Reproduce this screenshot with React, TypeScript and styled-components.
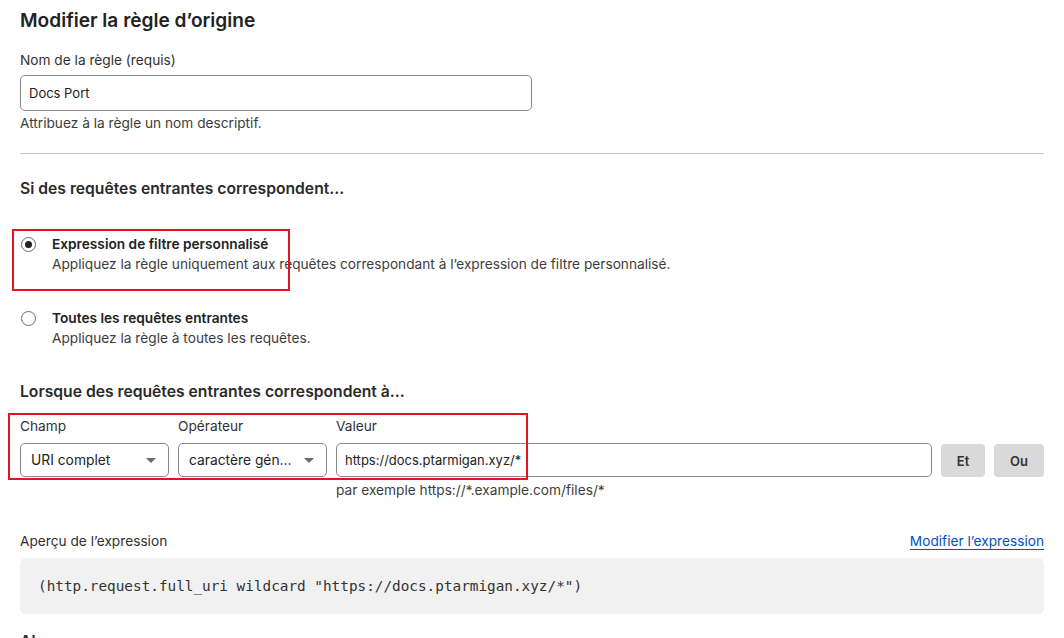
import styled, { createGlobalStyle } from 'styled-components';

const GlobalStyle = createGlobalStyle`
  html, body {
    margin: 0;
    padding: 0;
    background: #ffffff;
  }
  body {
    font-family: Inter, "Noto Sans", Arial, sans-serif;
    color: #313131;
    overflow: hidden;
  }
`;

const Page = styled.div`
  padding: 8px 20px 0 20px;
  width: 1024px;
  height: 638px;
  overflow: hidden;
`;

const Title = styled.h1`
  margin: 0;
  font-size: 19.1px;
  line-height: 24px;
  font-weight: 600;
  color: #222;
`;

const Label = styled.div<{ $mt?: number }>`
  font-size: 13.7px;
  line-height: 20px;
  color: #313131;
  margin-top: ${(p) => p.$mt ?? 0}px;
`;

const Help = styled.div<{ $mt?: number; $indent?: number }>`
  font-size: 13.7px;
  line-height: 20px;
  color: #3d3d3d;
  margin-top: ${(p) => p.$mt ?? 0}px;
  padding-left: ${(p) => p.$indent ?? 0}px;
`;

const TextInput = styled.div<{ $width?: string }>`
  box-sizing: border-box;
  width: ${(p) => p.$width ?? '100%'};
  height: 36px;
  border: 1px solid #8a8a8a;
  border-radius: 5px;
  padding: 0 8px;
  display: flex;
  align-items: center;
  font-size: 13px;
  color: #222;
`;

const Divider = styled.hr`
  margin: 20px 0 0 0;
  border: none;
  border-top: 1px solid #c4c4c4;
  height: 0;
`;

const SectionHeading = styled.h2<{ $mt: number }>`
  margin: ${(p) => p.$mt}px 0 0 0;
  font-size: 15.7px;
  line-height: 24px;
  font-weight: 600;
  color: #2b2b2b;
`;

// red outline drawn over a group of controls
const Highlight = styled.div<{ $l: number; $t: number; $w: number; $h: number }>`
  position: absolute;
  left: ${(p) => p.$l}px;
  top: ${(p) => p.$t}px;
  width: ${(p) => p.$w}px;
  height: ${(p) => p.$h}px;
  border: 2px solid #e3141f;
  box-sizing: border-box;
  pointer-events: none;
`;

const Option = styled.div<{ $mt: number }>`
  position: relative;
  margin-top: ${(p) => p.$mt}px;
  display: flex;
  gap: 16px;
  padding-left: 1px;
`;

const Radio = styled.span<{ $checked?: boolean }>`
  box-sizing: border-box;
  width: 15px;
  height: 15px;
  margin-top: 3px;
  border-radius: 50%;
  border: 1px solid #6b6b6b;
  display: flex;
  align-items: center;
  justify-content: center;
  flex-shrink: 0;
  &::after {
    content: '';
    display: ${(p) => (p.$checked ? 'block' : 'none')};
    width: 7px;
    height: 7px;
    border-radius: 50%;
    background: #222;
  }
`;

const OptionText = styled.div`
  display: flex;
  flex-direction: column;
`;

const OptionTitle = styled.div`
  font-size: 13.7px;
  line-height: 20px;
  font-weight: 600;
  color: #222;
`;

const MatchBlock = styled.div`
  position: relative;
  margin-top: 12px;
`;

const MatchRow = styled.div`
  display: flex;
  align-items: flex-start;
  gap: 9px;
`;

const Field = styled.div<{ $width?: number; $grow?: boolean }>`
  display: flex;
  flex-direction: column;
  gap: 7px;
  width: ${(p) => (p.$width ? `${p.$width}px` : 'auto')};
  flex: ${(p) => (p.$grow ? '1' : 'none')};
`;

const Select = styled.div`
  box-sizing: border-box;
  height: 34px;
  border: 1px solid #8a8a8a;
  border-radius: 5px;
  padding: 0 12px 0 10px;
  display: flex;
  align-items: center;
  justify-content: space-between;
  font-size: 13.8px;
  color: #222;
`;

const Caret = styled.span`
  width: 0;
  height: 0;
  border-left: 5px solid transparent;
  border-right: 5px solid transparent;
  border-top: 5px solid #6b6b6b;
`;

const ValueInput = styled(TextInput)`
  height: 34px;
`;

const Buttons = styled.div`
  display: flex;
  gap: 9px;
  margin-top: 28px;
`;

const SmallButton = styled.button<{ $width: number }>`
  width: ${(p) => p.$width}px;
  height: 33px;
  border: none;
  border-radius: 4px;
  background: #d9d9d9;
  font-family: inherit;
  font-size: 13px;
  font-weight: 600;
  color: #333;
`;

const PreviewHeader = styled.div`
  margin-top: 31px;
  display: flex;
  justify-content: space-between;
  align-items: center;
`;

const Link = styled.a`
  font-size: 13.7px;
  line-height: 20px;
  color: #0051c3;
  text-decoration: underline;
  text-underline-offset: 3px;
`;

const CodeBox = styled.div`
  margin-top: 7px;
  height: 56px;
  background: #f1f1f1;
  border-radius: 6px;
  display: flex;
  align-items: center;
  padding: 0 18px;
  font-family: "DejaVu Sans Mono", "Liberation Mono", monospace;
  font-size: 14.35px;
  color: #333;
  white-space: pre;
`;

export default function App() {
  return (
    <>
      <GlobalStyle />
      <Page>
        <Title>Modifier la règle d’origine</Title>

        <Label $mt={18}>Nom de la règle (requis)</Label>
        <div style={{ marginTop: 5 }}>
          <TextInput $width="512px">Docs Port</TextInput>
        </div>
        <Help $mt={2}>Attribuez à la règle un nom descriptif.</Help>

        <Divider />

        <SectionHeading $mt={23}>Si des requêtes entrantes correspondent…</SectionHeading>

        <Option $mt={33}>
          <Radio $checked />
          <OptionText>
            <OptionTitle>Expression de filtre personnalisé</OptionTitle>
            <Help>
              Appliquez la règle uniquement aux requêtes correspondant à l’expression de filtre personnalisé.
            </Help>
          </OptionText>
          <Highlight $l={-8} $t={-5} $w={278} $h={62} />
        </Option>

        <Option $mt={34}>
          <Radio />
          <OptionText>
            <OptionTitle>Toutes les requêtes entrantes</OptionTitle>
            <Help>Appliquez la règle à toutes les requêtes.</Help>
          </OptionText>
        </Option>

        <SectionHeading $mt={32}>Lorsque des requêtes entrantes correspondent à…</SectionHeading>

        <MatchBlock>
          <MatchRow>
            <Field $width={149}>
              <Label>Champ</Label>
              <Select>
                URI complet
                <Caret />
              </Select>
            </Field>
            <Field $width={149}>
              <Label>Opérateur</Label>
              <Select>
                caractère gén…
                <Caret />
              </Select>
            </Field>
            <Field $grow>
              <Label>Valeur</Label>
              <ValueInput>https://docs.ptarmigan.xyz/*</ValueInput>
            </Field>
            <Buttons>
              <SmallButton $width={44}>Et</SmallButton>
              <SmallButton $width={50}>Ou</SmallButton>
            </Buttons>
          </MatchRow>
          <Help $mt={3} $indent={316}>par exemple https://*.example.com/files/*</Help>
          <Highlight $l={-12} $t={-3} $w={520} $h={67} />
        </MatchBlock>

        <PreviewHeader>
          <Label>Aperçu de l’expression</Label>
          <Link href="#">Modifier l’expression</Link>
        </PreviewHeader>
        <CodeBox>(http.request.full_uri wildcard "https://docs.ptarmigan.xyz/*")</CodeBox>

        <SectionHeading $mt={16}>Alors…</SectionHeading>
      </Page>
    </>
  );
}
